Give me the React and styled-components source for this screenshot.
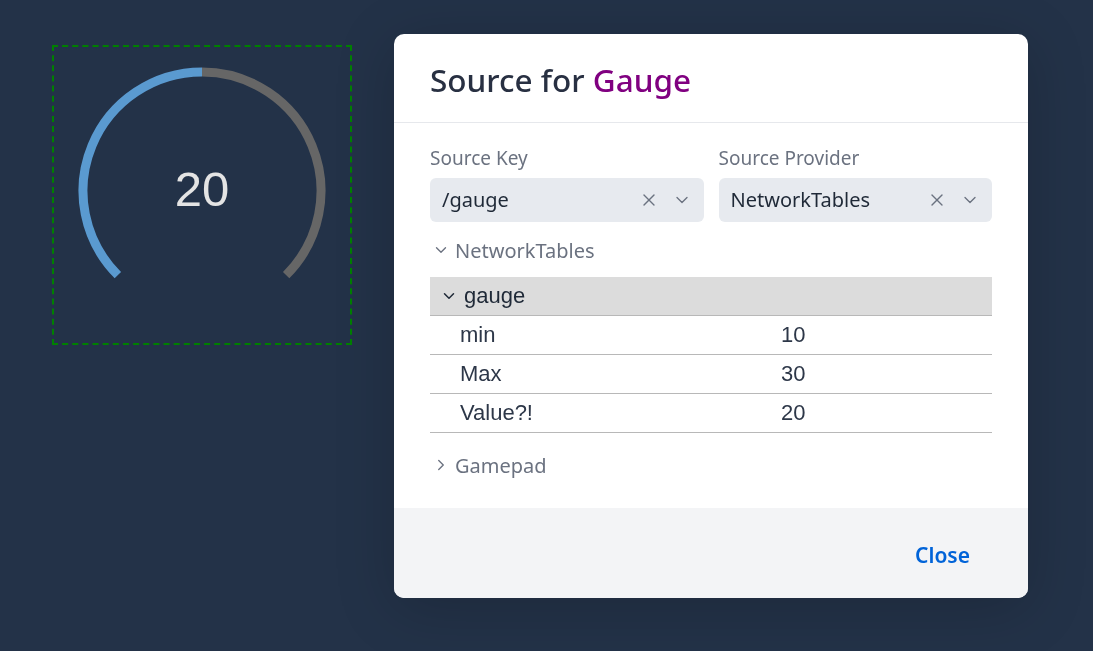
import React from "react";
import styled, { createGlobalStyle } from "styled-components";
import { X, ChevronDown, ChevronRight } from "lucide-react";

const GlobalStyle = createGlobalStyle`
  html, body {
    margin: 0;
    padding: 0;
    background: #233248;
    font-family: "Noto Sans", "Open Sans", sans-serif;
  }
`;

const Dashboard = styled.div`
  min-height: 100vh;
  padding: 45px 0 0 52px;
  box-sizing: border-box;
`;

const Widget = styled.div`
  width: 300px;
  height: 300px;
  box-sizing: border-box;
  border: 2px dashed #008000;
  display: flex;
  justify-content: center;
`;

const Overlay = styled.div`
  position: fixed;
  inset: 0;
  padding: 34px 0 0 394px;
`;

const Modal = styled.section`
  width: 634px;
  background: #fff;
  border-radius: 10px;
  overflow: hidden;
  box-shadow: 0 10px 60px rgba(0, 0, 0, 0.18);
`;

const Header = styled.header`
  height: 89px;
  display: flex;
  align-items: center;
  padding: 2px 36px 0;
  box-sizing: border-box;
  border-bottom: 1px solid #e6e8ec;
  font-size: 31.5px;
  font-weight: 500;
  color: #283042;
  h2 {
    margin: 0;
    font: inherit;
  }
  span {
    color: #800080;
  }
`;

const Body = styled.div`
  padding: 23px 36px 27px;
`;

const Fields = styled.div`
  display: grid;
  grid-template-columns: 1fr 1fr;
  column-gap: 15px;
`;

const Field = styled.label`
  display: flex;
  flex-direction: column;
  gap: 8px;
  font-size: 19px;
  line-height: 24px;
  color: #6b7280;
`;

const Select = styled.div`
  height: 44px;
  border-radius: 6px;
  background: #e7eaef;
  display: flex;
  align-items: center;
  padding: 0 12px 0 12px;
  gap: 13px;
  color: #1f2937;
  font-size: 20px;
  .value {
    flex: 1;
  }
  svg {
    color: #6b7280;
  }
`;

const TreeToggle = styled.div`
  display: flex;
  align-items: center;
  gap: 5px;
  height: 32px;
  margin-top: ${(p) => p.$top}px;
  padding-left: 2px;
  font-size: 20px;
  color: #6b7280;
`;

const Table = styled.div`
  margin-top: 11px;
  font-family: "Liberation Sans", Arial, sans-serif;
  font-size: 22px;
  color: #2d3748;
`;

const GroupRow = styled.div`
  height: 38px;
  display: flex;
  align-items: center;
  gap: 6px;
  padding-left: 10px;
  background: #dcdcdc;
  border-bottom: 1px solid #b8b8b8;
  color: #1f2937;
`;

const Row = styled.div`
  height: 38px;
  display: grid;
  grid-template-columns: 321px 1fr;
  align-items: center;
  padding-left: 30px;
  border-bottom: 1px solid #b8b8b8;
`;

const Footer = styled.footer`
  height: 90px;
  box-sizing: border-box;
  background: #f3f4f6;
  display: flex;
  align-items: center;
  justify-content: flex-end;
  padding: 4px 42px 0;
`;

const TextButton = styled.button`
  background: none;
  border: none;
  padding: 0 16px;
  height: 40px;
  font-family: inherit;
  font-size: 21px;
  font-weight: 600;
  color: #0063d8;
  cursor: pointer;
`;

function polar(cx, cy, r, deg) {
  const a = (deg * Math.PI) / 180;
  return [cx + r * Math.sin(a), cy - r * Math.cos(a)];
}

function arcPath(cx, cy, r, from, to) {
  const [x1, y1] = polar(cx, cy, r, from);
  const [x2, y2] = polar(cx, cy, r, to);
  const large = to - from > 180 ? 1 : 0;
  return `M ${x1} ${y1} A ${r} ${r} 0 ${large} 1 ${x2} ${y2}`;
}

function Gauge({ min, max, value }) {
  const cx = 148;
  const cy = 144;
  const r = 119;
  const split = -135 + ((value - min) / (max - min)) * 270;
  return (
    <svg width="296" height="296" viewBox="0 0 296 296">
      <path d={arcPath(cx, cy, r, split, 135)} stroke="#666" strokeWidth="9" fill="none" />
      <path d={arcPath(cx, cy, r, -135, split)} stroke="#5a9ad0" strokeWidth="9" fill="none" />
      <text
        x={cx}
        y="159"
        textAnchor="middle"
        fill="#e4e4e4"
        fontFamily="Liberation Sans, Arial, sans-serif"
        fontSize="49"
      >
        {value}
      </text>
    </svg>
  );
}

const entries = [
  { key: "min", value: 10 },
  { key: "Max", value: 30 },
  { key: "Value?!", value: 20 },
];

export default function App() {
  return (
    <>
      <GlobalStyle />
      <Dashboard>
        <Widget>
          <Gauge min={10} max={30} value={20} />
        </Widget>
      </Dashboard>
      <Overlay>
        <Modal>
          <Header>
            <h2>
              Source for <span>Gauge</span>
            </h2>
          </Header>
          <Body>
            <Fields>
              <Field>
                Source Key
                <Select>
                  <span className="value">/gauge</span>
                  <X size={20} strokeWidth={1.6} />
                  <ChevronDown size={20} strokeWidth={1.6} />
                </Select>
              </Field>
              <Field>
                Source Provider
                <Select>
                  <span className="value">NetworkTables</span>
                  <X size={20} strokeWidth={1.6} />
                  <ChevronDown size={20} strokeWidth={1.6} />
                </Select>
              </Field>
            </Fields>
            <TreeToggle $top={12}>
              <ChevronDown size={18} strokeWidth={1.8} />
              NetworkTables
            </TreeToggle>
            <Table>
              <GroupRow>
                <ChevronDown size={18} strokeWidth={2} />
                gauge
              </GroupRow>
              {entries.map((e) => (
                <Row key={e.key}>
                  <span>{e.key}</span>
                  <span>{e.value}</span>
                </Row>
              ))}
            </Table>
            <TreeToggle $top={16}>
              <ChevronRight size={18} strokeWidth={1.8} />
              Gamepad
            </TreeToggle>
          </Body>
          <Footer>
            <TextButton>Close</TextButton>
          </Footer>
        </Modal>
      </Overlay>
    </>
  );
}
